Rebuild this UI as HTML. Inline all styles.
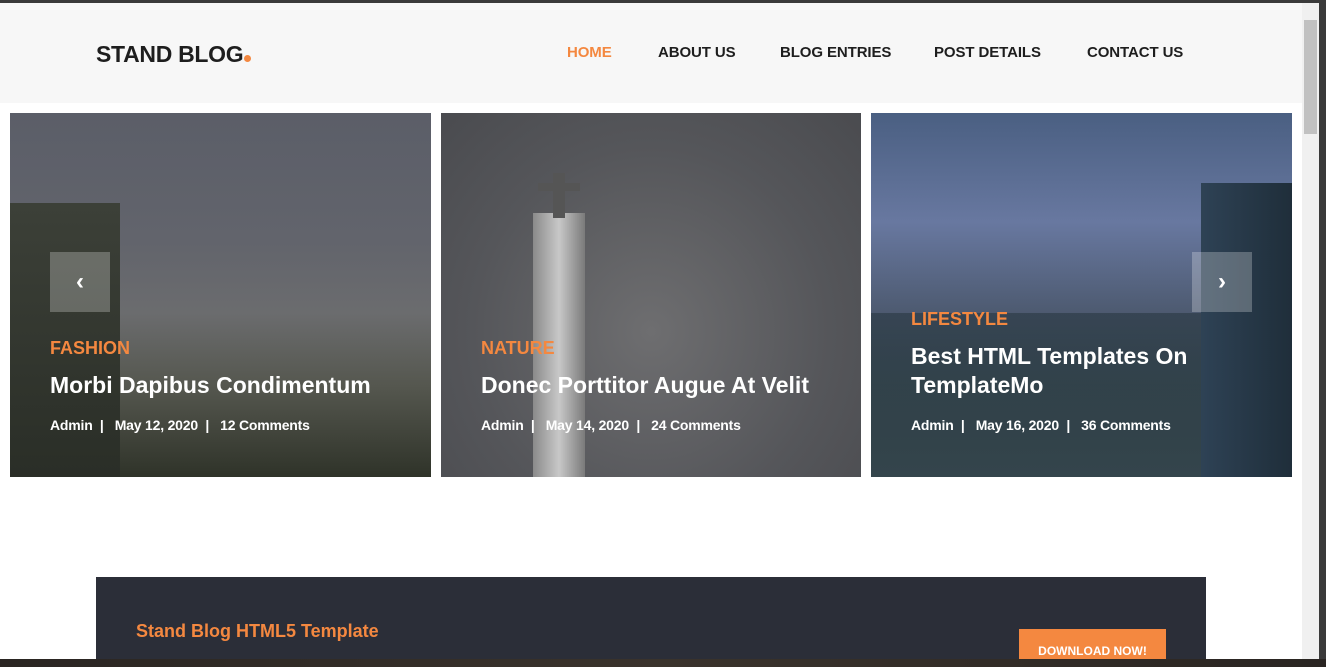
<!DOCTYPE html>
<html><head><meta charset="utf-8"><style>
*{margin:0;padding:0;box-sizing:border-box}
body{width:1326px;height:667px;overflow:hidden;background:#3a3a3a;font-family:"Liberation Sans",Arial,sans-serif;position:relative}
#page{position:absolute;left:0;top:3px;width:1302px;height:656px;background:#fff;overflow:hidden}
#sb{position:absolute;left:1302px;top:3px;width:17px;height:656px;background:#f0f0f0}
#thumb{position:absolute;left:2px;top:17px;width:13px;height:114px;background:#c1c1c1}
header{position:absolute;left:0;top:0;width:1302px;height:100px;background:#f7f7f7}
.logo{position:absolute;left:96px;top:38px;font-size:23px;font-weight:bold;color:#1e1e1e;letter-spacing:-0.3px}
.dot{display:inline-block;width:7px;height:7px;border-radius:50%;background:#f48840;margin-left:1px}
nav a{position:absolute;top:41px;font-size:15px;font-weight:bold;color:#1e1e1e;text-decoration:none;letter-spacing:-0.1px}
.card{position:absolute;top:110px;width:421px;height:364px;overflow:hidden}
.card .cat{position:absolute;left:40px;font-size:18px;font-weight:bold;color:#f48840}
.card h4{position:absolute;left:40px;font-size:23px;font-weight:bold;color:#fff;line-height:29px}
.card .meta{position:absolute;left:40px;font-size:14px;font-weight:bold;color:#fff;letter-spacing:-0.2px;word-spacing:0}
.arr{position:absolute;top:249px;width:60px;height:60px;background:rgba(255,255,255,.25);color:#fff;font-size:24px;text-align:center;line-height:60px;font-weight:bold}
.banner{position:absolute;left:96px;top:574px;width:1110px;height:90px;background:#2b2e38}
.banner .t{position:absolute;left:40px;top:44px;color:#f48840;font-size:18px;font-weight:bold}
.btn{position:absolute;left:923px;top:52px;width:147px;height:40px;background:#f48840;color:#fff;font-size:12px;font-weight:bold;text-align:center;line-height:44px}
#bot{position:absolute;left:0;top:659px;width:1326px;height:8px;background:linear-gradient(90deg,#2a2522,#3a332c 50%,#2a2522)}
</style></head><body>
<div id="page">
<header>
<div class="logo">STAND BLOG<span class="dot"></span></div>
<nav>
<a style="left:567px;color:#f48840">HOME</a>
<a style="left:658px">ABOUT US</a>
<a style="left:780px">BLOG ENTRIES</a>
<a style="left:934px">POST DETAILS</a>
<a style="left:1087px">CONTACT US</a>
</nav>
</header>
<div class="card" style="left:10px;background:linear-gradient(180deg,#5b5e68 0%,#62646c 35%,#6b6c6e 55%,#55574f 75%,#2f3329 100%)">
<div style="position:absolute;left:0;top:90px;width:110px;height:274px;background:linear-gradient(180deg,#3c4038,#2a2e27)"></div>
<div class="cat" style="top:225px">FASHION</div>
<h4 style="top:258px">Morbi Dapibus Condimentum</h4>
<div class="meta" style="top:304px">Admin &nbsp;| &nbsp; May 12, 2020 &nbsp;| &nbsp; 12 Comments</div>
</div>
<div class="card" style="left:441px;width:420px;background:radial-gradient(ellipse at 50% 60%,#6e6e70,#55565a 60%,#4a4b4f)">
<div style="position:absolute;left:92px;top:100px;width:52px;height:264px;background:linear-gradient(90deg,#8a8a8a,#c8c8c8 50%,#7a7a7a)"></div>
<div style="position:absolute;left:112px;top:60px;width:12px;height:45px;background:#555"></div>
<div style="position:absolute;left:97px;top:70px;width:42px;height:8px;background:#555"></div>
<div class="cat" style="top:225px">NATURE</div>
<h4 style="top:258px">Donec Porttitor Augue At Velit</h4>
<div class="meta" style="top:304px">Admin &nbsp;| &nbsp; May 14, 2020 &nbsp;| &nbsp; 24 Comments</div>
</div>
<div class="card" style="left:871px;background:linear-gradient(180deg,#4a5f82 0%,#6878a0 30%,#4d5a70 55%,#3a4a55 75%,#2d3a40 100%)">
<div style="position:absolute;left:330px;top:70px;width:91px;height:294px;background:linear-gradient(90deg,#2e4255,#1f2e3a)"></div>
<div style="position:absolute;left:0;top:200px;width:330px;height:164px;background:linear-gradient(180deg,rgba(40,55,65,.6),#34454c)"></div>
<div class="cat" style="top:196px">LIFESTYLE</div>
<h4 style="top:229px">Best HTML Templates On<br>TemplateMo</h4>
<div class="meta" style="top:304px">Admin &nbsp;| &nbsp; May 16, 2020 &nbsp;| &nbsp; 36 Comments</div>
</div>
<div class="arr" style="left:50px">&#8249;</div>
<div class="arr" style="left:1192px">&#8250;</div>
<div class="banner"><div class="t">Stand Blog HTML5 Template</div><div class="btn">DOWNLOAD NOW!</div></div>
</div>
<div id="sb"><div id="thumb"></div></div>
<div id="bot"></div>
</body></html>
